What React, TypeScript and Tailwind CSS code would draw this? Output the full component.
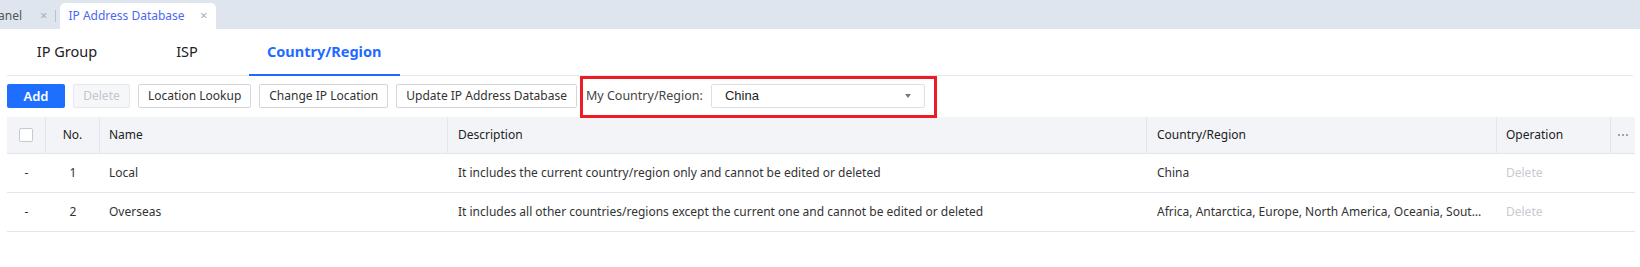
import React from "react";

const columns = [
  { key: "check", label: "", width: "w-[39px]", align: "justify-center" },
  { key: "no", label: "No.", width: "w-[54px]", align: "justify-center" },
  { key: "name", label: "Name", width: "w-[348px]", align: "pl-[9px]" },
  { key: "desc", label: "Description", width: "w-[699px]", align: "pl-[10px]" },
  { key: "country", label: "Country/Region", width: "w-[350px]", align: "pl-[10px]" },
  { key: "op", label: "Operation", width: "w-[114px]", align: "pl-[9px]" },
];

const rows = [
  {
    no: 1,
    name: "Local",
    desc: "It includes the current country/region only and cannot be edited or deleted",
    country: "China",
  },
  {
    no: 2,
    name: "Overseas",
    desc: "It includes all other countries/regions except the current one and cannot be edited or deleted",
    country: "Africa, Antarctica, Europe, North America, Oceania, South America, Asia",
  },
];

function Btn({ children }: { children: React.ReactNode }) {
  return (
    <button className="h-[24px] px-[9px] border border-[#d3d6dc] rounded-[2px] bg-white text-[12px] text-[#333] leading-none">
      {children}
    </button>
  );
}

export default function App() {
  return (
    <div className="w-[1640px] h-[267px] bg-white overflow-hidden text-[#333] font-['Noto_Sans',sans-serif]">
      {/* window tab strip */}
      <div className="h-[29px] bg-[#dee5ef] flex items-end text-[12px]">
        <div className="flex items-center h-[26px] text-[#555]">
          <span className="ml-[-2px]">anel</span>
          <span className="ml-[18px] text-[#a9afb8] text-[13px]">×</span>
          <span className="ml-[8px] h-[12px] w-px bg-[#b9c0ca]" />
        </div>
        <div className="ml-[4px] h-[26px] w-[156px] bg-white rounded-t-[5px] flex items-center pl-[8px] pr-[9px] justify-between">
          <span className="text-[#4e68f0]">IP Address Database</span>
          <span className="text-[#a9afb8] text-[13px]">×</span>
        </div>
      </div>

      <div className="px-[7px]">
        {/* sub tabs */}
        <div className="h-[47px] flex border-b border-[#e4e7ed] text-[14.5px]">
          <div className="min-w-[120px] px-[20px] flex items-center justify-center text-[#222]">IP Group</div>
          <div className="min-w-[120px] px-[20px] flex items-center justify-center text-[#222]">ISP</div>
          <div className="relative min-w-[120px] px-[20px] flex items-center justify-center font-bold text-[#1f6bff]">
            Country/Region
            <span className="absolute left-[2px] right-[1px] bottom-[-1px] h-[2px] bg-[#1f6bff]" />
          </div>
        </div>

        {/* toolbar */}
        <div className="mt-[8px] h-[24px] flex items-center gap-[8px]">
          <button className="h-[24px] w-[58px] rounded-[2px] bg-[#1e6fff] text-white text-[13px] font-semibold leading-none">
            Add
          </button>
          <button className="h-[24px] w-[57px] rounded-[2px] border border-[#e6e8ec] bg-[#f6f7f9] text-[#c3c7ce] text-[12px] leading-none">
            Delete
          </button>
          <Btn>Location Lookup</Btn>
          <Btn>Change IP Location</Btn>
          <Btn>Update IP Address Database</Btn>
          <div className="relative ml-[1px] flex items-center gap-[8px]">
            <span className="text-[12.5px] text-[#444]">My Country/Region:</span>
            <div className="h-[24px] w-[214px] border border-[#dcdfe4] rounded-[2px] flex items-center pl-[13px] pr-[13px] justify-between">
              <span className="text-[13px] text-[#222] font-['Liberation_Sans',sans-serif]">China</span>
              <span className="w-0 h-0 border-l-[3px] border-r-[3px] border-t-[4px] border-l-transparent border-r-transparent border-t-[#777]" />
            </div>
            {/* highlight annotation */}
            <div className="absolute left-[-6px] right-[-12px] top-[-8px] bottom-[-10px] border-[3px] border-[#ec1c24] pointer-events-none" />
          </div>
        </div>

        {/* table */}
        <div className="mt-[9px] w-[1628px] text-[12px]">
          <div className="h-[37px] flex bg-[#f3f4f8] border-b border-[#e2e5ec]">
            {columns.map((c) => (
              <div key={c.key} className={`${c.width} flex items-center border-r border-[#e2e5ec] ${c.align}`}>
                {c.key === "check" ? (
                  <span className="w-[14px] h-[14px] bg-white border border-[#c6cad2] rounded-[2px]" />
                ) : (
                  <span className="text-[#222]">{c.label}</span>
                )}
              </div>
            ))}
            <div className="flex-1 flex items-center justify-center gap-[2px]">
              <span className="w-[2px] h-[2px] bg-[#a0a4ab]" />
              <span className="w-[2px] h-[2px] bg-[#a0a4ab]" />
              <span className="w-[2px] h-[2px] bg-[#a0a4ab]" />
            </div>
          </div>
          {rows.map((r) => (
            <div key={r.no} className="h-[39px] flex border-b border-[#e2e5ec] text-[#333]">
              <div className="w-[39px] flex items-center justify-center">-</div>
              <div className="w-[54px] flex items-center justify-center">{r.no}</div>
              <div className="w-[348px] flex items-center pl-[9px]">{r.name}</div>
              <div className="w-[699px] flex items-center pl-[10px]">{r.desc}</div>
              <div className="w-[350px] flex items-center pl-[10px] pr-[14px] min-w-0">
                <span className="truncate">{r.country}</span>
              </div>
              <div className="w-[114px] flex items-center pl-[9px] text-[#c8cbd2]">Delete</div>
            </div>
          ))}
        </div>
      </div>
    </div>
  );
}
